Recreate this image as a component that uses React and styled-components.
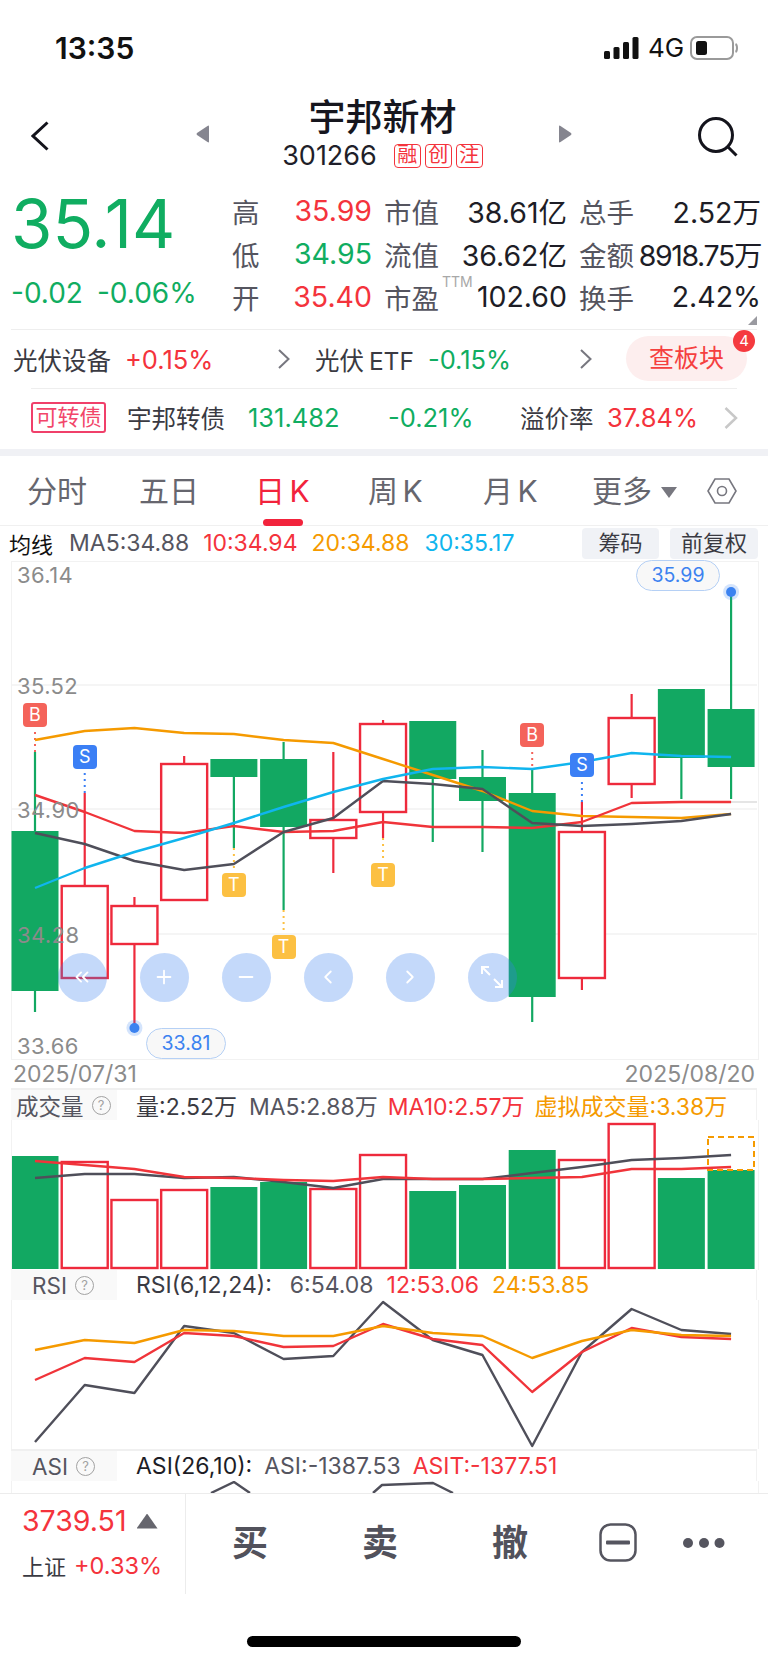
import React from 'react';
import styled, { createGlobalStyle } from 'styled-components';
import { ChevronsLeft, ChevronLeft, ChevronRight, Plus, Minus } from 'lucide-react';

const FONT = 'Inter, "Noto Sans CJK SC", sans-serif';
const TONES = {
    red: '#f4333c',
    green: '#10ad61',
    dark: '#1d1d26',
    text: '#3a3a42',
    gray: '#55555f',
    orange: '#f59a00',
    blue: '#10b5ee',
    muted: '#8b8b8b'
};
const UP = '#ee2a3c';
const DOWN = '#12a862';

const centerX = (i) => 35 + i * 49.72;
const toPoints = (ys) => ys.map((y, i) => `${centerX(i)},${y}`).join(' ');

const CANDLES = [
    { up: false, high: 752, low: 1012, top: 831, bottom: 991 },
    { up: true, high: 793, low: 978, top: 886, bottom: 978 },
    { up: true, high: 897, low: 1028, top: 906, bottom: 944 },
    { up: true, high: 756, low: 900, top: 764, bottom: 900 },
    { up: false, high: 759, low: 848, top: 759, bottom: 777 },
    { up: false, high: 742, low: 910, top: 759, bottom: 827 },
    { up: true, high: 752, low: 873, top: 820, bottom: 838 },
    { up: true, high: 720, low: 838, top: 724, bottom: 812 },
    { up: false, high: 721, low: 842, top: 721, bottom: 779 },
    { up: false, high: 750, low: 852, top: 777, bottom: 801 },
    { up: false, high: 770, low: 1022, top: 793, bottom: 997 },
    { up: true, high: 802, low: 990, top: 832, bottom: 978 },
    { up: true, high: 694, low: 798, top: 718, bottom: 784 },
    { up: false, high: 689, low: 799, top: 689, bottom: 758 },
    { up: false, high: 592, low: 799, top: 709, bottom: 767 }
];

const MA_LINES = [
    { color: '#f59a00', ys: [740, 731, 728, 733, 734, 740, 743, 759, 775, 791, 811, 816, 817, 818, 814] },
    { color: '#f0343a', ys: [795, 812, 831, 833, 826, 832, 831, 822, 827, 827, 828, 822, 803, 802, 802] },
    { color: '#4f4f5a', ys: [833, 844, 861, 870, 864, 832, 818, 781, 784, 789, 823, 826, 824, 821, 814] },
    { color: '#10b5ee', ys: [888, 868, 852, 838, 823, 807, 792, 779, 769, 767, 769, 762, 753, 756, 757] }
];

const VOLUMES = [
    { up: false, top: 1156 }, { up: true, top: 1162 }, { up: true, top: 1200 },
    { up: true, top: 1190 }, { up: false, top: 1187 }, { up: false, top: 1182 },
    { up: true, top: 1189 }, { up: true, top: 1155 }, { up: false, top: 1191 },
    { up: false, top: 1185 }, { up: false, top: 1150 }, { up: true, top: 1160 },
    { up: true, top: 1124 }, { up: false, top: 1178 }, { up: false, top: 1170 }
];

const VOL_LINES = [
    { color: '#4f4f5a', ys: [1178, 1174, 1174, 1178, 1177, 1182, 1188, 1179, 1179, 1179, 1173, 1167, 1160, 1158, 1155] },
    { color: '#f0343a', ys: [1161, 1165, 1169, 1177, 1178, 1180, 1181, 1177, 1179, 1179, 1178, 1177, 1169, 1169, 1167] }
];

const RSI_LINES = [
    { color: '#4f4f5a', ys: [1442, 1385, 1393, 1326, 1333, 1359, 1356, 1302, 1340, 1355, 1446, 1352, 1309, 1330, 1334] },
    { color: '#f0343a', ys: [1380, 1358, 1362, 1333, 1336, 1347, 1346, 1324, 1339, 1345, 1392, 1352, 1328, 1337, 1339] },
    { color: '#f59a00', ys: [1350, 1340, 1343, 1330, 1331, 1336, 1336, 1326, 1333, 1336, 1358, 1341, 1330, 1335, 1336] }
];

const CONNECTORS = [
    { i: 0, from: 732, to: 752, color: '#f4635a' },
    { i: 1, from: 773, to: 793, color: '#3b7ff5' },
    { i: 4, from: 848, to: 868, color: '#fcc042' },
    { i: 5, from: 910, to: 930, color: '#fcc042' },
    { i: 7, from: 838, to: 862, color: '#fcc042' },
    { i: 10, from: 752, to: 770, color: '#f4635a' },
    { i: 11, from: 782, to: 802, color: '#3b7ff5' }
];

const MARKERS = [
    { i: 0, y: 715, label: 'B', bg: '#f4635a' },
    { i: 1, y: 757, label: 'S', bg: '#3b7ff5' },
    { i: 4, y: 885, label: 'T', bg: '#fcc042' },
    { i: 5, y: 947, label: 'T', bg: '#fcc042' },
    { i: 7, y: 875, label: 'T', bg: '#fcc042' },
    { i: 10, y: 735, label: 'B', bg: '#f4635a' },
    { i: 11, y: 765, label: 'S', bg: '#3b7ff5' }
];

const AXIS = [
    { y: 575, label: '36.14' },
    { y: 686, label: '35.52' },
    { y: 810, label: '34.90' },
    { y: 935, label: '34.28' },
    { y: 1046, label: '33.66' }
];

export default function App() {
    return (
        <S.Page>
            <GlobalStyle />

            <S.StatusBar>
                <S.Clock>13:35</S.Clock>
                <S.StatusIcons>
                    <svg width="35" height="22" viewBox="0 0 35 22">
                        <rect x="0" y="14" width="6" height="8" rx="1.5" fill="#111" />
                        <rect x="9.5" y="10" width="6" height="12" rx="1.5" fill="#111" />
                        <rect x="19" y="5" width="6" height="17" rx="1.5" fill="#111" />
                        <rect x="28.5" y="0" width="6" height="22" rx="1.5" fill="#111" />
                    </svg>
                    <S.Network>4G</S.Network>
                    <svg width="48" height="24" viewBox="0 0 48 24">
                        <rect x="1" y="1" width="42" height="22" rx="6" fill="none" stroke="#9a9a9a" strokeWidth="2" />
                        <rect x="6" y="5" width="11" height="14" rx="2.5" fill="#111" />
                        <path d="M45.5 8 C47.5 9 47.5 15 45.5 16" fill="none" stroke="#9a9a9a" strokeWidth="2" />
                    </svg>
                </S.StatusIcons>
            </S.StatusBar>

            <S.Nav>
                <S.NavBack width="18" height="30" viewBox="0 0 18 30">
                    <path d="M16.5 1.5 L2 15 L16.5 28.5" fill="none" stroke="#14141c" strokeWidth="3" />
                </S.NavBack>
                <S.Switcher>
                    <svg width="14" height="18" viewBox="0 0 14 18">
                        <path d="M13 1.5 V16.5 Q13 18 11.5 17 L1 10 Q0 9 1 8 L11.5 1 Q13 0 13 1.5 Z" fill="#85858f" />
                    </svg>
                    <S.StockTitle>
                        <S.StockName>宇邦新材</S.StockName>
                        <S.StockMeta>
                            <S.StockCode>301266</S.StockCode>
                            <S.TagGroup>
                                <S.Tag>融</S.Tag>
                                <S.Tag>创</S.Tag>
                                <S.Tag>注</S.Tag>
                            </S.TagGroup>
                        </S.StockMeta>
                    </S.StockTitle>
                    <svg width="14" height="18" viewBox="0 0 14 18">
                        <path d="M1 1.5 V16.5 Q1 18 2.5 17 L13 10 Q14 9 13 8 L2.5 1 Q1 0 1 1.5 Z" fill="#85858f" />
                    </svg>
                </S.Switcher>
                <S.NavSearch width="40" height="40" viewBox="0 0 40 40">
                    <circle cx="18" cy="18" r="16.5" fill="none" stroke="#14141c" strokeWidth="3" />
                    <path d="M29.5 29.5 L38.5 38.5" fill="none" stroke="#14141c" strokeWidth="3" />
                </S.NavSearch>
            </S.Nav>

            <S.Quote>
                <S.PriceBlock>
                    <S.BigPrice>35.14</S.BigPrice>
                    <S.PriceChange>
                        <span>-0.02</span>
                        <span>-0.06%</span>
                    </S.PriceChange>
                </S.PriceBlock>
                <S.StatGrid>
                    <S.Stat><S.StatLabel>高</S.StatLabel><S.StatValue $tone="red">35.99</S.StatValue></S.Stat>
                    <S.Stat><S.StatLabel>市值</S.StatLabel><S.StatValue>38.61亿</S.StatValue></S.Stat>
                    <S.Stat><S.StatLabel>总手</S.StatLabel><S.StatValue>2.52万</S.StatValue></S.Stat>
                    <S.Stat><S.StatLabel>低</S.StatLabel><S.StatValue $tone="green">34.95</S.StatValue></S.Stat>
                    <S.Stat><S.StatLabel>流值</S.StatLabel><S.StatValue>36.62亿</S.StatValue></S.Stat>
                    <S.Stat><S.StatLabel>金额</S.StatLabel><S.StatValue $tight>8918.75万</S.StatValue></S.Stat>
                    <S.Stat><S.StatLabel>开</S.StatLabel><S.StatValue $tone="red">35.40</S.StatValue></S.Stat>
                    <S.Stat><S.StatLabel>市盈<S.Ttm>TTM</S.Ttm></S.StatLabel><S.StatValue>102.60</S.StatValue></S.Stat>
                    <S.Stat><S.StatLabel>换手</S.StatLabel><S.StatValue>2.42%</S.StatValue></S.Stat>
                </S.StatGrid>
                <S.CornerMark />
            </S.Quote>

            <S.SectorRow>
                <S.SectorLink $width={302} $trail={25}>
                    <S.Name>光伏设备</S.Name>
                    <S.Num $tone="red">+0.15%</S.Num>
                    <S.Chevron width="12" height="20" viewBox="0 0 12 20">
                        <path d="M1 1 L10.5 10 L1 19" fill="none" stroke="#77777f" strokeWidth="2" />
                    </S.Chevron>
                </S.SectorLink>
                <S.SectorLink $width={311} $trail={34}>
                    <S.SectorEtf>光伏 ETF</S.SectorEtf>
                    <S.Num $tone="green">-0.15%</S.Num>
                    <S.Chevron width="12" height="20" viewBox="0 0 12 20">
                        <path d="M1 1 L10.5 10 L1 19" fill="none" stroke="#77777f" strokeWidth="2" />
                    </S.Chevron>
                </S.SectorLink>
                <S.SectorButton>
                    查板块
                    <S.CountBadge>4</S.CountBadge>
                </S.SectorButton>
            </S.SectorRow>

            <S.BondRow>
                <S.BondTag>可转债</S.BondTag>
                <S.Name>宇邦转债</S.Name>
                <S.Num $tone="green">131.482</S.Num>
                <S.Num $tone="green">-0.21%</S.Num>
                <S.Name>溢价率</S.Name>
                <S.Num $tone="red">37.84%</S.Num>
                <svg width="14" height="22" viewBox="0 0 14 22">
                    <path d="M1.5 1 L12 11 L1.5 21" fill="none" stroke="#c8c8c8" strokeWidth="2.5" />
                </svg>
            </S.BondRow>

            <S.Band />

            <S.Tabs>
                <S.Tab>分时</S.Tab>
                <S.Tab>五日</S.Tab>
                <S.Tab $active>日 K</S.Tab>
                <S.Tab>周 K</S.Tab>
                <S.Tab>月 K</S.Tab>
                <S.Tab>
                    更多
                    <S.MoreCaret />
                </S.Tab>
                <svg width="30" height="26" viewBox="0 0 30 26">
                    <path d="M8 1 H22 L29 13 L22 25 H8 L1 13 Z" fill="none" stroke="#77777f" strokeWidth="1.6" />
                    <circle cx="15" cy="13" r="4.5" fill="none" stroke="#77777f" strokeWidth="1.6" />
                </svg>
            </S.Tabs>

            <S.Legend>
                <S.LegendTitle>均线</S.LegendTitle>
                <S.LegendValue $tone="gray" $left={16}>MA5:34.88</S.LegendValue>
                <S.LegendValue $tone="red" $left={14}>10:34.94</S.LegendValue>
                <S.LegendValue $tone="orange" $left={14}>20:34.88</S.LegendValue>
                <S.LegendValue $tone="blue" $left={15}>30:35.17</S.LegendValue>
                <S.LegendButtons>
                    <S.LegendButton $width={77}>筹码</S.LegendButton>
                    <S.LegendButton $width={88}>前复权</S.LegendButton>
                </S.LegendButtons>
            </S.Legend>

            <S.Chart>
                <S.ChartCanvas width="768" height="498" viewBox="0 560 768 498">
                    <S.GridLine x1="11" x2="757" y1="685" y2="685" />
                    <S.GridLine x1="11" x2="757" y1="809" y2="809" />
                    <S.GridLine x1="11" x2="757" y1="934" y2="934" />
                    <line x1="731" x2="757" y1="802" y2="802" stroke="#dcdcdc" strokeWidth="1.5" />
                    {CANDLES.map((c, i) => (
                        <g key={i}>
                            <line x1={centerX(i)} x2={centerX(i)} y1={c.high} y2={c.low} stroke={c.up ? UP : DOWN} strokeWidth="2.2" />
                            {c.up
                                ? <rect x={centerX(i) - 23} y={c.top} width="46" height={c.bottom - c.top} fill="#fff" stroke={UP} strokeWidth="2.4" />
                                : <rect x={centerX(i) - 23.5} y={c.top} width="47" height={c.bottom - c.top} fill={DOWN} />}
                        </g>
                    ))}
                    {CONNECTORS.map((c) => (
                        <line key={c.i} x1={centerX(c.i)} x2={centerX(c.i)} y1={c.from} y2={c.to} stroke={c.color} strokeWidth="2" strokeDasharray="2 4" />
                    ))}
                    {MA_LINES.map((l) => (
                        <S.Trend key={l.color} points={toPoints(l.ys)} stroke={l.color} />
                    ))}
                    <circle cx={centerX(2)} cy="1028" r="8" fill="#3b82f0" opacity="0.22" />
                    <circle cx={centerX(2)} cy="1028" r="5" fill="#3b82f0" />
                    <circle cx={centerX(14)} cy="592" r="8" fill="#3b82f0" opacity="0.22" />
                    <circle cx={centerX(14)} cy="592" r="5" fill="#3b82f0" />
                </S.ChartCanvas>

                {AXIS.map((a) => (
                    <S.AxisLabel key={a.label} $top={a.y - 560}>{a.label}</S.AxisLabel>
                ))}
                {MARKERS.map((m) => (
                    <S.Marker key={m.i} $left={centerX(m.i)} $top={m.y - 560} $bg={m.bg}>{m.label}</S.Marker>
                ))}
                <S.PricePill $left={146} $top={468} $width={80}>33.81</S.PricePill>
                <S.PricePill $left={636} $top={0} $width={84}>35.99</S.PricePill>

                <S.FloatButtons>
                    <S.FloatButton><ChevronsLeft size={22} /></S.FloatButton>
                    <S.FloatButton><Plus size={22} /></S.FloatButton>
                    <S.FloatButton><Minus size={22} /></S.FloatButton>
                    <S.FloatButton><ChevronLeft size={22} /></S.FloatButton>
                    <S.FloatButton><ChevronRight size={22} /></S.FloatButton>
                    <S.FloatButton>
                        <svg width="24" height="24" viewBox="0 0 24 24" fill="none" stroke="#fff" strokeWidth="2">
                            <path d="M2 9 V2 H9 M2 2 L10 10 M22 15 V22 H15 M22 22 L14 14" />
                        </svg>
                    </S.FloatButton>
                </S.FloatButtons>
            </S.Chart>

            <S.DateRow>
                <span>2025/07/31</span>
                <span>2025/08/20</span>
            </S.DateRow>
            <S.PanelRule />

            <S.PanelHead>
                <S.PanelTab>成交量<S.Help>?</S.Help></S.PanelTab>
                <S.PanelValue $tone="text" $left={19}>量:2.52万</S.PanelValue>
                <S.PanelValue $tone="gray" $left={12}>MA5:2.88万</S.PanelValue>
                <S.PanelValue $tone="red" $left={10}>MA10:2.57万</S.PanelValue>
                <S.PanelValue $tone="orange" $left={10}>虚拟成交量:3.38万</S.PanelValue>
            </S.PanelHead>
            <S.Panel $height={150}>
                <svg width="768" height="150" viewBox="0 1120 768 150">
                    {VOLUMES.map((v, i) => (
                        v.up
                            ? <rect key={i} x={centerX(i) - 23} y={v.top} width="46" height={1268 - v.top} fill="#fff" stroke={UP} strokeWidth="2.4" />
                            : <rect key={i} x={centerX(i) - 23.5} y={v.top} width="47" height={1269 - v.top} fill={DOWN} />
                    ))}
                    <rect x="708" y="1137" width="46" height="33" fill="none" stroke="#f59a00" strokeWidth="2" strokeDasharray="6 4" />
                    {VOL_LINES.map((l) => (
                        <S.Trend key={l.color} points={toPoints(l.ys)} stroke={l.color} />
                    ))}
                </svg>
            </S.Panel>

            <S.PanelHead>
                <S.PanelTab $center>RSI<S.Help>?</S.Help></S.PanelTab>
                <S.PanelValue $tone="text" $left={19}>RSI(6,12,24):</S.PanelValue>
                <S.PanelValue $tone="gray" $left={18}>6:54.08</S.PanelValue>
                <S.PanelValue $tone="red" $left={13}>12:53.06</S.PanelValue>
                <S.PanelValue $tone="orange" $left={13}>24:53.85</S.PanelValue>
            </S.PanelHead>
            <S.Panel $height={149}>
                <svg width="768" height="149" viewBox="0 1300 768 149">
                    {RSI_LINES.map((l) => (
                        <S.Trend key={l.color} points={toPoints(l.ys)} stroke={l.color} />
                    ))}
                </svg>
            </S.Panel>
            <S.PanelRule />

            <S.PanelHead>
                <S.PanelTab $center>ASI<S.Help>?</S.Help></S.PanelTab>
                <S.PanelValue $tone="dark" $left={19}>ASI(26,10):</S.PanelValue>
                <S.PanelValue $tone="gray" $left={12}>ASI:-1387.53</S.PanelValue>
                <S.PanelValue $tone="red" $left={12}>ASIT:-1377.51</S.PanelValue>
            </S.PanelHead>
            <S.Panel $height={12}>
                <svg width="768" height="12" viewBox="0 1481 768 12">
                    <S.Trend points="211,1493 234,1482 250,1493" stroke="#4f4f5a" />
                    <S.Trend points="373,1493 382,1485 433,1483 453,1493" stroke="#4f4f5a" />
                </svg>
            </S.Panel>

            <S.BottomBar>
                <S.Index>
                    <S.IndexTop>
                        <S.IndexValue>3739.51</S.IndexValue>
                        <S.IndexArrow />
                    </S.IndexTop>
                    <S.IndexBottom>
                        <span>上证</span>
                        <S.IndexChange $tone="red">+0.33%</S.IndexChange>
                    </S.IndexBottom>
                </S.Index>
                <S.Actions>
                    <S.Action>买</S.Action>
                    <S.Action>卖</S.Action>
                    <S.Action>撤</S.Action>
                    <S.ActionIcon width="38" height="39" viewBox="0 0 38 39">
                        <rect x="1.5" y="1.5" width="35" height="36" rx="10" fill="none" stroke="#55555f" strokeWidth="2.5" />
                        <rect x="7" y="17.5" width="24" height="4" rx="1" fill="#55555f" />
                    </S.ActionIcon>
                    <S.MoreDots width="42" height="12" viewBox="0 0 42 12">
                        <circle cx="5" cy="6" r="5" fill="#55555f" />
                        <circle cx="21" cy="6" r="5" fill="#55555f" />
                        <circle cx="36.5" cy="6" r="5" fill="#55555f" />
                    </S.MoreDots>
                </S.Actions>
            </S.BottomBar>
            <S.HomeIndicator />
        </S.Page>
    );
}

const GlobalStyle = createGlobalStyle`
    html, body {
        margin: 0;
        padding: 0;
        background: #fff;
    }
    * {
        box-sizing: border-box;
    }
    svg {
        display: block;
    }
`;

const Num = styled.span`
    font-size: 25.5px;
    white-space: nowrap;
    color: ${({ $tone }) => TONES[$tone] || TONES.dark};
`;

const S = {
    Num,
    Page: styled.div`
        position: relative;
        width: 768px;
        height: 1663px;
        overflow: hidden;
        background: #fff;
        font-family: ${FONT};
        color: ${TONES.dark};
    `,
    StatusBar: styled.div`
        height: 92px;
        padding: 37px 31px 0 55px;
        display: flex;
        justify-content: space-between;
        align-items: flex-start;
    `,
    Clock: styled.div`
        font-size: 30px;
        line-height: 22px;
        font-weight: 600;
        color: #111;
    `,
    StatusIcons: styled.div`
        display: flex;
        align-items: center;
        gap: 9px;
        margin-top: -1px;
        margin-right: -1px;
    `,
    Network: styled.span`
        font-size: 26px;
        line-height: 22px;
        color: #111;
        width: 33px;
    `,
    Nav: styled.div`
        height: 80px;
        display: flex;
        align-items: flex-start;
        padding-left: 31px;
        padding-right: 31px;
    `,
    NavBack: styled.svg`
        margin-top: 29px;
    `,
    Switcher: styled.div`
        width: 376px;
        margin-left: 147px;
        display: flex;
        justify-content: space-between;
        align-items: center;
        margin-top: 8px;
        height: 68px;
    `,
    StockTitle: styled.div`
        display: flex;
        flex-direction: column;
        align-items: center;
        margin-right: 3px;
    `,
    StockName: styled.div`
        font-size: 37px;
        line-height: 36px;
        margin-bottom: 8px;
        font-weight: 500;
        color: #16161e;
    `,
    StockMeta: styled.div`
        display: flex;
        align-items: center;
        gap: 17px;
        height: 24px;
    `,
    StockCode: styled.span`
        font-size: 27px;
        line-height: 24px;
        color: #1f1f2a;
    `,
    TagGroup: styled.div`
        display: flex;
        gap: 4px;
    `,
    Tag: styled.span`
        width: 27px;
        height: 24px;
        border: 1.5px solid #f4333c;
        border-radius: 4px;
        color: #f4333c;
        font-size: 20px;
        line-height: 21px;
        text-align: center;
    `,
    NavSearch: styled.svg`
        margin-left: auto;
        margin-top: 25px;
        margin-right: -1px;
    `,
    Quote: styled.div`
        position: relative;
        height: 158px;
        margin: 0 11px;
        border-bottom: 1px solid #eeeeee;
        display: flex;
    `,
    PriceBlock: styled.div`
        flex: none;
        width: 221px;
    `,
    BigPrice: styled.div`
        font-size: 67px;
        line-height: 80px;
        margin-top: 12px;
        color: ${TONES.green};
    `,
    PriceChange: styled.div`
        display: flex;
        gap: 14px;
        margin-top: 14px;
        font-size: 28px;
        line-height: 30px;
        color: ${TONES.green};
    `,
    StatGrid: styled.div`
        flex: none;
        display: grid;
        grid-template-columns: 140px 183px 182px;
        column-gap: 12px;
        grid-auto-rows: 43px;
        margin-top: 17px;
    `,
    Stat: styled.div`
        display: flex;
        justify-content: space-between;
        align-items: center;
        white-space: nowrap;
    `,
    StatLabel: styled.span`
        position: relative;
        font-size: 27.5px;
        color: ${TONES.gray};
    `,
    StatValue: styled(Num)`
        font-size: 28.5px;
        letter-spacing: ${({ $tight }) => ($tight ? '-1.4px' : '0')};
    `,
    Ttm: styled.sup`
        position: absolute;
        left: 58px;
        top: -3px;
        font-size: 14px;
        line-height: 16px;
        color: #a8a8a8;
    `,
    CornerMark: styled.i`
        position: absolute;
        right: 0;
        bottom: 4px;
        width: 9px;
        height: 9px;
        background: #9a9aa0;
        clip-path: polygon(100% 0, 100% 100%, 0 100%);
    `,
    SectorRow: styled.div`
        height: 58px;
        padding-left: 13px;
        display: flex;
        align-items: center;
    `,
    SectorLink: styled.div`
        width: ${({ $width }) => $width}px;
        padding-right: ${({ $trail }) => $trail}px;
        display: flex;
        align-items: center;
        gap: 14px;
    `,
    Name: styled.span`
        font-size: 24.5px;
        color: ${TONES.text};
        white-space: nowrap;
    `,
    SectorEtf: styled.span`
        font-size: 24.5px;
        word-spacing: -2px;
        color: ${TONES.text};
        white-space: nowrap;
    `,
    Chevron: styled.svg`
        margin-left: auto;
    `,
    SectorButton: styled.div`
        position: relative;
        width: 121px;
        height: 45px;
        margin-top: -2px;
        border-radius: 23px;
        background: #fdeeee;
        color: #f5403f;
        font-size: 25px;
        line-height: 45px;
        text-align: center;
    `,
    CountBadge: styled.span`
        position: absolute;
        top: -6px;
        right: -8px;
        width: 22px;
        height: 22px;
        border-radius: 50%;
        background: #f53a3f;
        color: #fff;
        font-size: 15px;
        line-height: 22px;
        text-align: center;
    `,
    BondRow: styled.div`
        position: relative;
        height: 60px;
        margin-top: 1px;
        padding-left: 31px;
        padding-bottom: 3px;
        display: grid;
        grid-template-columns: 96px 121px 140px 132px 87px 117px 14px;
        align-items: center;
        &::before {
            content: '';
            position: absolute;
            left: 31px;
            right: 31px;
            top: -1px;
            height: 1px;
            background: #eeeeee;
        }
    `,
    BondTag: styled.span`
        width: 75px;
        height: 31px;
        border: 2px solid #f0406a;
        border-radius: 3px;
        color: #f2466a;
        font-size: 22px;
        line-height: 27px;
        text-align: center;
    `,
    Band: styled.div`
        height: 7px;
        background: #f0f1f5;
    `,
    Tabs: styled.div`
        height: 70px;
        padding-left: 27px;
        display: grid;
        grid-template-columns: 112px 116px 113px 115px 109px 115px 30px;
        align-items: center;
        border-bottom: 1px solid #f0f0f0;
        word-spacing: -4px;
    `,
    Tab: styled.div`
        position: relative;
        height: 70px;
        line-height: 70px;
        font-size: 30px;
        white-space: nowrap;
        color: ${({ $active }) => ($active ? '#f2233c' : '#66666e')};
        &::after {
            content: '';
            display: ${({ $active }) => ($active ? 'block' : 'none')};
            position: absolute;
            left: 8px;
            bottom: 0;
            width: 40px;
            height: 7px;
            border-radius: 4px;
            background: #f2233c;
        }
    `,
    MoreCaret: styled.i`
        display: inline-block;
        width: 16px;
        height: 11px;
        margin-left: 9px;
        vertical-align: 4px;
        background: #77777f;
        clip-path: polygon(0 0, 100% 0, 50% 100%);
    `,
    Legend: styled.div`
        height: 34px;
        padding-left: 9px;
        padding-right: 10px;
        display: flex;
        align-items: center;
    `,
    LegendTitle: styled.span`
        width: 44px;
        font-size: 22px;
        color: #111;
    `,
    LegendValue: styled.span`
        margin-left: ${({ $left }) => $left}px;
        font-size: 23px;
        white-space: nowrap;
        color: ${({ $tone }) => TONES[$tone]};
    `,
    LegendButtons: styled.div`
        margin-left: auto;
        display: flex;
        gap: 11px;
    `,
    LegendButton: styled.span`
        width: ${({ $width }) => $width}px;
        height: 31px;
        border-radius: 4px;
        background: #f0f2f6;
        color: ${TONES.text};
        font-size: 22px;
        line-height: 31px;
        text-align: center;
    `,
    Chart: styled.div`
        position: relative;
        height: 498px;
        &::before {
            content: '';
            position: absolute;
            left: 11px;
            top: 1px;
            width: 746px;
            height: 497px;
            border: 1.5px solid #f2f2f2;
            pointer-events: none;
        }
    `,
    ChartCanvas: styled.svg`
        position: relative;
    `,
    GridLine: styled.line`
        stroke: #f2f2f2;
        stroke-width: 1.5;
    `,
    Trend: styled.polyline`
        fill: none;
        stroke-width: 2.4;
        stroke-linejoin: round;
    `,
    AxisLabel: styled.span`
        position: absolute;
        left: 17px;
        top: ${({ $top }) => $top}px;
        transform: translateY(-50%);
        font-size: 22px;
        letter-spacing: 0.4px;
        color: ${TONES.muted};
    `,
    Marker: styled.span`
        position: absolute;
        left: ${({ $left }) => $left}px;
        top: ${({ $top }) => $top}px;
        width: 24px;
        height: 24px;
        transform: translate(-50%, -50%);
        border-radius: 4px;
        background: ${({ $bg }) => $bg};
        color: #fff;
        font-size: 18px;
        line-height: 24px;
        text-align: center;
    `,
    PricePill: styled.span`
        position: absolute;
        left: ${({ $left }) => $left}px;
        top: ${({ $top }) => $top}px;
        width: ${({ $width }) => $width}px;
        height: 31px;
        border: 1px solid #b5d0f5;
        border-radius: 16px;
        background: #f8f8f8;
        color: #3b82f0;
        font-size: 19.5px;
        line-height: 29px;
        text-align: center;
    `,
    FloatButtons: styled.div`
        position: absolute;
        left: 57.5px;
        top: 392.5px;
        display: flex;
        gap: 33px;
    `,
    FloatButton: styled.div`
        width: 49px;
        height: 49px;
        border-radius: 50%;
        background: rgba(59, 130, 240, 0.3);
        color: #fff;
        display: flex;
        align-items: center;
        justify-content: center;
    `,
    DateRow: styled.div`
        height: 30px;
        padding: 2px 13px 0 13px;
        display: flex;
        justify-content: space-between;
        align-items: center;
        font-size: 23px;
        color: ${TONES.muted};
    `,
    PanelHead: styled.div`
        height: 30px;
        margin: 0 11px;
        display: flex;
        align-items: center;
        border-left: 1px solid #f2f2f2;
        border-right: 1px solid #f2f2f2;
    `,
    PanelTab: styled.div`
        width: 106px;
        height: 30px;
        margin-left: -1px;
        padding-left: ${({ $center }) => ($center ? 21 : 5)}px;
        background: #f9f9f9;
        display: flex;
        align-items: center;
        gap: 8px;
        font-size: 22.5px;
        color: ${TONES.gray};
    `,
    Help: styled.i`
        width: 19px;
        height: 19px;
        border: 1.5px solid #a2a2a2;
        border-radius: 50%;
        color: #a2a2a2;
        font-size: 13px;
        font-style: normal;
        line-height: 16px;
        text-align: center;
    `,
    PanelValue: styled.span`
        margin-left: ${({ $left }) => $left}px;
        font-size: 23px;
        white-space: nowrap;
        color: ${({ $tone }) => TONES[$tone]};
    `,
    Panel: styled.div`
        height: ${({ $height }) => $height}px;
        overflow: hidden;
        position: relative;
        &::before {
            content: '';
            position: absolute;
            left: 11px;
            top: 0;
            bottom: 0;
            width: 746px;
            border-left: 1px solid #f2f2f2;
            border-right: 1px solid #f2f2f2;
            pointer-events: none;
        }
    `,
    PanelRule: styled.div`
        height: 2px;
        margin: 0 11px;
        background: #f0f0f0;
    `,
    BottomBar: styled.div`
        height: 101px;
        border-top: 1px solid #ececec;
        display: flex;
    `,
    Index: styled.div`
        width: 186px;
        padding: 12px 0 0 22px;
        border-right: 1px solid #ececec;
    `,
    IndexTop: styled.div`
        display: flex;
        align-items: center;
        gap: 9px;
    `,
    IndexValue: styled.span`
        font-size: 28.5px;
        line-height: 30px;
        color: ${TONES.red};
    `,
    IndexArrow: styled.i`
        width: 21px;
        height: 15px;
        margin-left: 1px;
        background: #66666e;
        clip-path: polygon(50% 0, 100% 100%, 0 100%);
    `,
    IndexBottom: styled.div`
        display: flex;
        align-items: center;
        gap: 8px;
        margin-top: 13px;
        font-size: 22px;
        color: ${TONES.text};
    `,
    IndexChange: styled(Num)`
        font-size: 23.5px;
    `,
    Actions: styled.div`
        flex: 1;
        padding-left: 46px;
        display: flex;
        align-items: center;
        margin-top: -3px;
    `,
    Action: styled.span`
        width: 36px;
        margin-right: 94px;
        font-size: 36px;
        font-weight: 700;
        line-height: 40px;
        color: #52525c;
        &:nth-child(3) {
            margin-right: 71px;
        }
    `,
    ActionIcon: styled.svg`
        flex: none;
    `,
    MoreDots: styled.svg`
        margin-left: 46px;
    `,
    HomeIndicator: styled.div`
        width: 274px;
        height: 11px;
        margin: 42px auto 0;
        border-radius: 6px;
        background: #000;
    `
};
